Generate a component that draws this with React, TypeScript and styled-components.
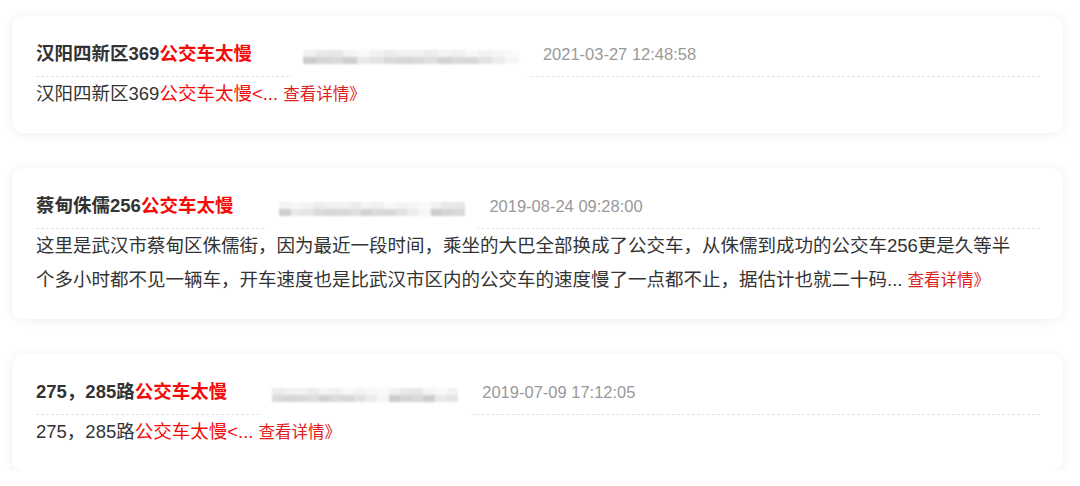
import styled, { createGlobalStyle } from 'styled-components';

const GlobalStyle = createGlobalStyle`
    html, body {
        margin: 0;
        padding: 0;
        background: #fff;
    }
    body {
        font-family: 'Liberation Sans', 'Noto Sans CJK SC', sans-serif;
        color: #333;
    }
`;

const Page = styled.div`
    display: flex;
    flex-direction: column;
    gap: 35px;
    padding: 16px 17px 0 12px;
`;

//Card
const Card = styled.div`
    background: #fff;
    border-radius: 12px;
    box-shadow: 0 1px 12px rgba(0, 0, 0, 0.07);
    padding: 24px 23px 22px 24px;
`;

const Header = styled.div`
    display: flex;
    align-items: center;
    height: 28px;
    padding-bottom: 8px;
    border-bottom: 1px dashed #e3e3e3;
`;

const Title = styled.h3`
    margin: 0;
    font-size: 18.5px;
    font-weight: bold;
    line-height: 28px;
    color: #333;
    white-space: nowrap;
`;

const Red = styled.span`
    color: #f50a0a;
`;

//blurred user name
const Mask = styled.div<{ $gap: number; $width: number }>`
    position: relative;
    margin-left: ${(p) => p.$gap}px;
    width: ${(p) => p.$width}px;
    height: 28px;
    flex-shrink: 0;
`;

const MaskBlob = styled.div`
    position: absolute;
    left: 0;
    right: 0;
    top: -6px;
    bottom: -12px;
    background: #fff;
    border-radius: 16px;
    display: flex;
    flex-direction: column;
    justify-content: center;
    padding: 0 18px;
    filter: blur(0.8px);
`;

const MosaicRow = styled.div`
    display: flex;
    height: 7px;
`;

const Cell = styled.div<{ $shade: number }>`
    flex: 1;
    background: rgb(${(p) => `${p.$shade},${p.$shade},${p.$shade}`});
`;

const Date = styled.span`
    font-size: 16.5px;
    color: #999;
    white-space: nowrap;
    margin-left: 6px;
`;

const Body = styled.p`
    margin: 0;
    max-width: 990px;
    font-size: 18.5px;
    line-height: 34px;
    color: #333;
`;

const More = styled.span`
    font-size: 16.5px;
    color: #dd2020;
`;

const shades = [
    [240, 232, 230, 244, 248, 242, 236, 240, 242, 236, 244, 240, 248, 242, 246, 250],
    [204, 212, 216, 206, 232, 228, 218, 214, 216, 222, 210, 218, 216, 226, 236, 246],
];

function Mosaic({ seed }: { seed: number }) {
    return (
        <MaskBlob>
            {shades.map((row, r) => (
                <MosaicRow key={r}>
                    {row.map((v, i) => (
                        <Cell key={i} $shade={row[(i + seed) % row.length]} />
                    ))}
                </MosaicRow>
            ))}
        </MaskBlob>
    );
}

const posts = [
    {
        name: '汉阳四新区369',
        date: '2021-03-27 12:48:58',
        gap: 33,
        width: 252,
        body: (
            <>
                汉阳四新区369<Red>公交车太慢&lt;... </Red>
            </>
        ),
    },
    {
        name: '蔡甸侏儒256',
        date: '2019-08-24 09:28:00',
        gap: 28,
        width: 222,
        body: (
            <>
                这里是武汉市蔡甸区侏儒街，因为最近一段时间，乘坐的大巴全部换成了公交车，从侏儒到成功的公交车256更是久等半个多小时都不见一辆车，开车速度也是比武汉市区内的公交车的速度慢了一点都不止，据估计也就二十码...{' '}
            </>
        ),
    },
    {
        name: '275，285路',
        date: '2019-07-09 17:12:05',
        gap: 27,
        width: 222,
        body: (
            <>
                275，285路<Red>公交车太慢&lt;... </Red>
            </>
        ),
    },
];

export default function App() {
    return (
        <>
            <GlobalStyle />
            <Page>
                {posts.map((post, i) => (
                    <Card key={i}>
                        <Header>
                            <Title>
                                {post.name}
                                <Red>公交车太慢</Red>
                            </Title>
                            <Mask $gap={post.gap} $width={post.width}>
                                <Mosaic seed={i * 3} />
                            </Mask>
                            <Date>{post.date}</Date>
                        </Header>
                        <Body>
                            {post.body}
                            <More>查看详情》</More>
                        </Body>
                    </Card>
                ))}
            </Page>
        </>
    );
}
